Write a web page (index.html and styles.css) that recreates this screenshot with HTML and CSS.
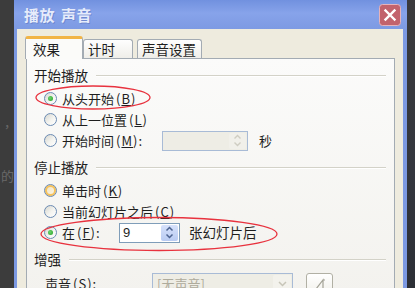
FILE: index.html
```html
<!DOCTYPE html>
<html lang="zh">
<head>
<meta charset="utf-8">
<title>播放 声音</title>
<link rel="stylesheet" href="styles.css">
</head>
<body>
<div class="screen">
  <div class="bg-left"><span class="bg-t1">，/</span><span class="bg-t2">的</span></div>
  <div class="window">
    <div class="titlebar">
      <span class="title">播放 声音</span>
      <span class="close">
        <svg width="22" height="22" viewBox="0 0 22 22"><rect x="0.5" y="0.5" width="21" height="21" rx="3" fill="#c2636d" stroke="#e6b3ba"/><path d="M6.5 6.5 L15.5 15.5 M15.5 6.5 L6.5 15.5" stroke="#fff" stroke-width="2.4" stroke-linecap="square"/></svg>
      </span>
    </div>
    <div class="body">
      <div class="tabs">
        <div class="tab active">效果</div>
        <div class="tab t2">计时</div>
        <div class="tab t3">声音设置</div>
      </div>
      <div class="panel">
        <div class="group-head"><span class="group-label">开始播放</span><i class="rule"></i></div>
        <div class="rows">
          <div class="row"><span class="radio checked"></span><span class="lbl">从头开始<span class="mn">(<u>B</u>)</span></span></div>
          <div class="row"><span class="radio"></span><span class="lbl">从上一位置<span class="mn">(<u>L</u>)</span></span></div>
          <div class="row"><span class="radio"></span><span class="lbl w-time">开始时间<span class="mn">(<u>M</u>):</span></span>
            <span class="spin-box disabled w-86"><span class="spin-text"></span><span class="spin-btn"><svg width="13" height="15" viewBox="0 0 13 15"><path d="M3.5 5.5 L6.5 2.5 L9.5 5.5 M3.5 9.5 L6.5 12.5 L9.5 9.5" fill="none" stroke="#cfcdc2" stroke-width="1.4"/></svg></span></span>
            <span class="unit">秒</span></div>
        </div>
        <div class="group-head g2"><span class="group-label">停止播放</span><i class="rule"></i></div>
        <div class="rows">
          <div class="row"><span class="radio hover"></span><span class="lbl">单击时<span class="mn">(<u>K</u>)</span></span></div>
          <div class="row"><span class="radio"></span><span class="lbl">当前幻灯片之后<span class="mn">(<u>C</u>)</span></span></div>
          <div class="row"><span class="radio checked"></span><span class="lbl w-at">在<span class="mn">(<u>F</u>):</span></span>
            <span class="spin-box w-61"><span class="spin-text">9</span><span class="spin-btn active"><svg width="13" height="15" viewBox="0 0 13 15"><path d="M3.5 5.5 L6.5 2.5 L9.5 5.5 M3.5 9.5 L6.5 12.5 L9.5 9.5" fill="none" stroke="#4d6390" stroke-width="1.5"/></svg></span></span>
            <span class="unit u2">张幻灯片后</span></div>
        </div>
        <div class="group-head g3"><span class="group-label">增强</span><i class="rule"></i></div>
        <div class="sound-row">
          <span class="sound-lbl">声音<span class="mn">(<u>S</u>):</span></span>
          <span class="combo"><span class="combo-text">[无声音]</span><span class="combo-btn"><svg width="11" height="8" viewBox="0 0 11 8"><path d="M2 2 L5.5 5.5 L9 2" fill="none" stroke="#c7c5b8" stroke-width="1.5"/></svg></span></span>
          <span class="icon-btn"><svg width="16" height="16" viewBox="0 0 16 16"><path d="M4 13 L11 4 L11 15 M11 4 L13 4" fill="none" stroke="#a3a296" stroke-width="1.2"/></svg></span>
        </div>
      </div>
    </div>
  </div>
  <div class="bg-right"></div>
  <svg class="marks" width="415" height="288" viewBox="0 0 415 288">
    <ellipse cx="93" cy="97.5" rx="57" ry="11.5" fill="none" stroke="#e8323e" stroke-width="1.3"/>
    <ellipse cx="159" cy="234" rx="118" ry="16.5" fill="none" stroke="#e8323e" stroke-width="1.3"/>
  </svg>
</div>
</body>
</html>
```

FILE: styles.css
```css
* { box-sizing: border-box; }
html, body { margin: 0; padding: 0; }
body {
  width: 415px;
  height: 288px;
  overflow: hidden;
  background: #3a3a3a;
  font-family: "Noto Sans CJK SC", "Liberation Sans", sans-serif;
  color: #1e1e1e;
}
.screen {
  position: relative;
  display: flex;
  width: 415px;
  height: 288px;
}
.bg-left {
  width: 14px;
  flex: none;
  background: #3c3c3c;
  color: #686868;
  font-size: 13px;
  line-height: 16px;
  display: flex;
  flex-direction: column;
  padding-top: 114px;
  overflow: hidden;
  white-space: nowrap;
}
.bg-t1 { margin-left: 4px; }
.bg-t2 { margin-top: 38px; margin-left: 1px; }
.bg-right {
  flex: 1;
  background: linear-gradient(#3a3a3c, #33363e 60%, #2c2f36);
}
.window {
  width: 393px;
  flex: none;
  display: flex;
  flex-direction: column;
}
.titlebar {
  height: 29px;
  flex: none;
  display: flex;
  align-items: center;
  justify-content: space-between;
  padding: 0 6px 0 10px;
  background: linear-gradient(#7191df, #87a3ea 45%, #7d9ae3);
}
.title {
  color: #e6ecfb;
  font-weight: bold;
  font-size: 15px;
  word-spacing: 2px;
  letter-spacing: 0.5px;
  text-shadow: 1px 1px 0 rgba(60, 80, 150, 0.3);
}
.close { display: flex; width: 22px; height: 22px; }
.body {
  flex: 1;
  background: #eeebde;
  border-left: 3px solid #7c99e2;
  border-right: 4px solid #7c99e2;
  padding: 7px 8px 0 9px;
  display: flex;
  flex-direction: column;
  min-height: 0;
}
.tabs {
  display: flex;
  align-items: flex-end;
  height: 22px;
  flex: none;
  position: relative;
  z-index: 1;
}
.tab {
  height: 19px;
  border: 1px solid #a3abb3;
  border-bottom: none;
  border-radius: 3px 3px 0 0;
  background: linear-gradient(#fefefe, #efeee9);
  font-size: 13.5px;
  line-height: 18px;
  padding: 0 4px;
  white-space: nowrap;
}
.tab.active {
  width: 58px;
  height: 23px;
  margin-left: -1px;
  margin-bottom: -1px;
  border-top: 3px solid #f1b446;
  background: #fbfbf9;
  line-height: 20px;
  padding-left: 7px;
}
.tab.t2 { width: 50px; }
.tab.t3 { width: 65px; margin-left: 4px; }
.panel {
  flex: 1;
  border: 1px solid #a3abb3;
  background: linear-gradient(#fbfbfa, #f3f2ee);
  padding: 8px 8px 0 7px;
  font-size: 13px;
}
.group-head {
  display: flex;
  align-items: center;
  height: 17px;
  gap: 8px;
}
.group-head.g2, .group-head.g3 { margin-top: 8px; }
.group-label { font-size: 13.5px; line-height: 17px; white-space: nowrap; }
.rule {
  flex: 1;
  height: 2px;
  border-top: 1px solid #d3d2c8;
  border-bottom: 1px solid #ffffff;
}
.rows { margin-top: 4px; }
.row {
  display: flex;
  align-items: center;
  height: 21px;
  padding-left: 10px;
  white-space: nowrap;
}
.radio {
  position: relative;
  width: 13px;
  height: 13px;
  flex: none;
  margin-right: 5px;
  border: 1px solid #6b8bb3;
  border-radius: 50%;
  background: linear-gradient(135deg, #d6d6cf, #f4f4f0 55%, #ffffff);
}
.radio.checked::after {
  content: "";
  position: absolute;
  left: 3px;
  top: 3px;
  width: 5px;
  height: 5px;
  border-radius: 50%;
  background: radial-gradient(circle at 40% 40%, #6fd36f, #21a121);
}
.radio.hover { box-shadow: inset 0 0 0 2px #f6c25c; background: linear-gradient(135deg, #efe2c0, #fdf8ea); }
.lbl { line-height: 17px; }
.mn { margin-left: 2px; letter-spacing: 1px; }
.w-time { width: 100px; flex: none; }
.w-at { width: 57px; flex: none; }
.spin-box {
  display: flex;
  align-items: center;
  height: 20px;
  border: 1px solid #7f9db9;
  background: #ffffff;
  padding: 1px;
  flex: none;
}
.spin-box.disabled { border-color: #a8bbd6; background: #eeede5; }
.w-86 { width: 86px; }
.w-61 { width: 61px; }
.spin-text {
  flex: 1;
  padding-left: 2px;
  font-family: "Liberation Sans", sans-serif;
  font-size: 13px;
  line-height: 16px;
}
.spin-btn {
  width: 17px;
  height: 16px;
  display: flex;
  align-items: center;
  justify-content: center;
  border-radius: 2px;
  background: #f1f0ea;
}
.spin-btn.active { background: linear-gradient(#d6e1fb, #b9cbf2); }
.unit { margin-left: 11px; line-height: 17px; }
.unit.u2 { margin-left: 9px; font-size: 13.5px; }
.sound-row {
  display: flex;
  align-items: flex-start;
  margin-top: 5px;
  padding-left: 11px;
  white-space: nowrap;
}
.sound-lbl { width: 107px; flex: none; line-height: 22px; }
.combo {
  display: flex;
  width: 141px;
  height: 22px;
  border: 1px solid #a8bbd6;
  background: #eeede5;
  padding: 1px;
  flex: none;
}
.combo-text { flex: 1; color: #aeab9c; padding-left: 3px; line-height: 18px; }
.combo-btn {
  width: 18px;
  height: 18px;
  display: flex;
  align-items: center;
  justify-content: center;
  background: #f3f2ec;
  border-radius: 2px;
}
.icon-btn {
  margin-left: 13px;
  width: 27px;
  height: 22px;
  border: 1px solid #b1b0a4;
  border-radius: 3px;
  background: linear-gradient(#ffffff, #f1f0ea);
  display: flex;
  justify-content: center;
  padding-top: 2px;
}
.marks {
  position: absolute;
  left: 0;
  top: 0;
  pointer-events: none;
}
```
